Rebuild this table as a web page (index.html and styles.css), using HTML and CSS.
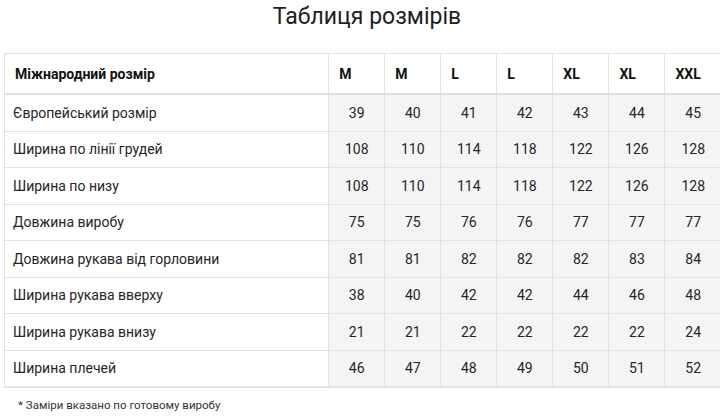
FILE: index.html
```html
<!DOCTYPE html>
<html lang="uk">
<head>
<meta charset="utf-8">
<link rel="stylesheet" href="styles.css">
</head>
<body>
<div class="page">
  <h1 class="title">Таблиця розмірів</h1>
  <table class="sizes">
    <colgroup>
      <col class="c-name"><col class="c-val"><col class="c-val"><col class="c-val"><col class="c-val"><col class="c-val"><col class="c-val"><col class="c-val">
    </colgroup>
    <thead>
      <tr><th>Міжнародний розмір</th><th>M</th><th>M</th><th>L</th><th>L</th><th>XL</th><th>XL</th><th>XXL</th></tr>
    </thead>
    <tbody>
      <tr><td>Європейський розмір</td><td>39</td><td>40</td><td>41</td><td>42</td><td>43</td><td>44</td><td>45</td></tr>
      <tr><td>Ширина по лінії грудей</td><td>108</td><td>110</td><td>114</td><td>118</td><td>122</td><td>126</td><td>128</td></tr>
      <tr><td>Ширина по низу</td><td>108</td><td>110</td><td>114</td><td>118</td><td>122</td><td>126</td><td>128</td></tr>
      <tr><td>Довжина виробу</td><td>75</td><td>75</td><td>76</td><td>76</td><td>77</td><td>77</td><td>77</td></tr>
      <tr><td>Довжина рукава від горловини</td><td>81</td><td>81</td><td>82</td><td>82</td><td>82</td><td>83</td><td>84</td></tr>
      <tr><td>Ширина рукава вверху</td><td>38</td><td>40</td><td>42</td><td>42</td><td>44</td><td>46</td><td>48</td></tr>
      <tr><td>Ширина рукава внизу</td><td>21</td><td>21</td><td>22</td><td>22</td><td>22</td><td>22</td><td>24</td></tr>
      <tr><td>Ширина плечей</td><td>46</td><td>47</td><td>48</td><td>49</td><td>50</td><td>51</td><td>52</td></tr>
    </tbody>
  </table>
  <p class="note">* Заміри вказано по готовому виробу</p>
</div>
</body>
</html>
```
FILE: styles.css
```css
html, body {
  margin: 0;
  padding: 0;
  background: #fff;
  overflow: hidden;
}
body {
  font-family: Roboto, "Liberation Sans", sans-serif;
  color: #222;
  width: 720px;
  height: 420px;
}
.page {
  padding: 0 0 0 4px;
  width: 740px;
}
.title {
  margin: 0;
  padding: 4px 14px 0 0;
  height: 53px;
  box-sizing: border-box;
  text-align: center;
  font-size: 23px;
  font-weight: 400;
  line-height: 26px;
  color: #1e1e1e;
}
.sizes {
  border-collapse: collapse;
  table-layout: fixed;
  width: 717px;
}
.c-name { width: 324px; }
.c-val { width: 56px; }
.sizes th, .sizes td {
  border: 1px solid #e3e3e3;
  padding: 0 0 0 10px;
  font-size: 14px;
  white-space: nowrap;
}
.sizes th:last-child, .sizes td:last-child {
  border-right: none;
}
.sizes th {
  height: 39px;
  text-align: left;
  font-weight: 700;
  font-size: 14px;
  color: #111;
  border-bottom: 2px solid #dde1e6;
  background: #fff;
}
.sizes td {
  height: 35.5px;
  background: #f4f4f4;
  text-align: center;
  padding: 0;
  color: #262626;
}
.sizes td:first-child {
  background: #fff;
  text-align: left;
  padding-left: 8px;
}
.sizes tr:last-child td {
  border-bottom: 2px solid #e3e3e3;
}
.note {
  margin: 10px 0 0 14px;
  font-size: 11.5px;
  color: #333;
}
```
